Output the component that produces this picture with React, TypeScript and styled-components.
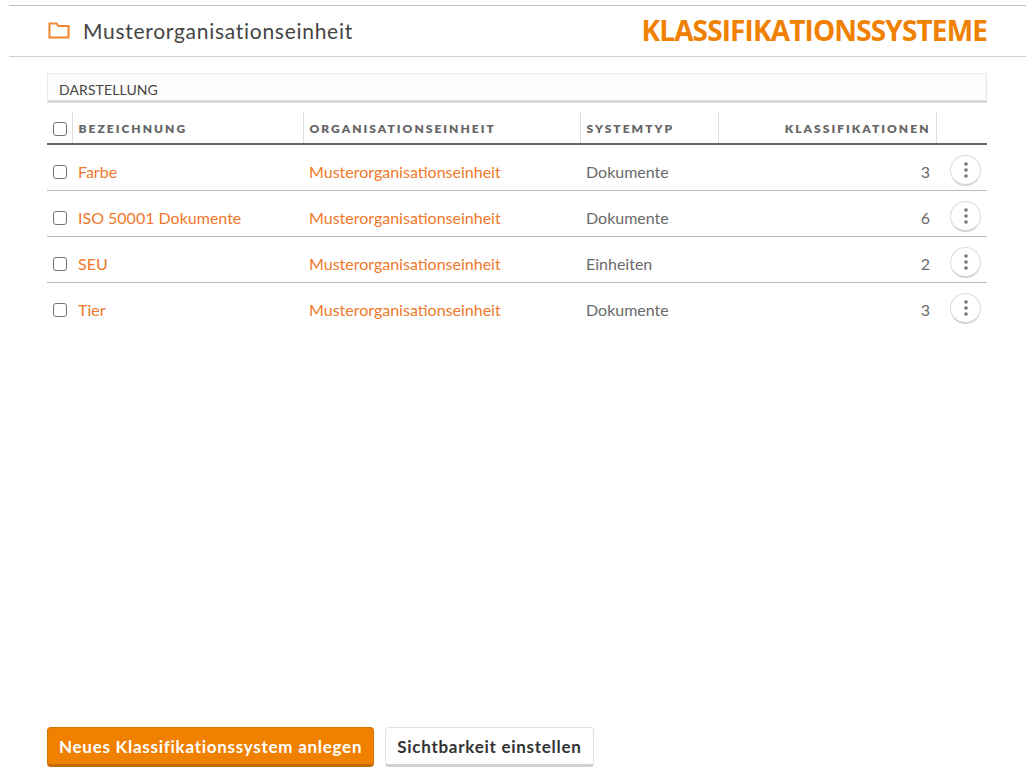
import React from 'react';
import styled, { createGlobalStyle } from 'styled-components';

const GlobalStyle = createGlobalStyle`
    html, body {
        margin: 0;
        padding: 0;
        background: #fff;
    }
    body {
        font-family: 'Lato', 'Liberation Sans', sans-serif;
        color: #444;
    }
`;

const Page = styled.div`
    width: 1035px;
    height: 777px;
    padding-top: 5px;
    box-sizing: border-box;
    display: flex;
    flex-direction: column;
    overflow: hidden;
`;

const Header = styled.header`
    margin: 0 9px;
    height: 52px;
    box-sizing: border-box;
    border-top: 1px solid #bdbdbd;
    border-bottom: 1px solid #cfcfcf;
    padding: 0 39px 2px 39px;
    display: flex;
    align-items: center;
    justify-content: space-between;
`;

const HeaderLeft = styled.div`
    display: flex;
    align-items: center;
    gap: 13px;
`;

const OrgName = styled.span`
    font-size: 21px;
    letter-spacing: 0.72px;
    color: #444;
`;

const PageTitle = styled.h1`
    margin: 0;
    font-family: 'Open Sans', sans-serif;
    font-size: 28px;
    font-weight: 700;
    letter-spacing: -0.87px;
    color: #f08000;
`;

const Content = styled.main`
    flex: 1;
    padding: 16px 48px 0 47px;
    display: flex;
    flex-direction: column;
`;

const ViewBar = styled.div`
    height: 30px;
    box-sizing: border-box;
    border: 1px solid #e6e6e6;
    border-bottom: 3px solid #d9d9d9;
    background: #fcfcfc;
    padding: 7px 0 0 11px;
    font-size: 14px;
    line-height: 18px;
    letter-spacing: 0.1px;
    color: #444;
`;

const Table = styled.table`
    width: 940px;
    margin-top: 9px;
    border-collapse: collapse;
    table-layout: fixed;
`;

const HeadCell = styled.th<{ $align?: string }>`
    height: 32px;
    box-sizing: border-box;
    padding: 2px 5px 0 6px;
    border-bottom: 2px solid #666;
    border-right: 1px solid #dedede;
    text-align: ${(p) => p.$align || 'left'};
    font-size: 12px;
    font-weight: 800;
    letter-spacing: 2.03px;
    color: #666;
    white-space: nowrap;

    &:last-child {
        border-right: none;
    }
`;

const CheckHeadCell = styled(HeadCell)`
    padding: 2px 0 0;
`;

const Row = styled.tr`
    border-bottom: 1px solid #b9b9b9;

    &:last-child {
        border-bottom: none;
    }
`;

const Cell = styled.td<{ $align?: string }>`
    height: 46px;
    box-sizing: border-box;
    padding: 8px 6px 0;
    text-align: ${(p) => p.$align || 'left'};
    font-size: 16px;
    color: #6a6a6a;
    white-space: nowrap;
`;

const CheckBodyCell = styled(Cell)`
    padding: 10px 0 0;
`;

const ActionCell = styled(Cell)`
    padding: 6px 0 0;
`;

const RowLink = styled.a`
    color: #f0782a;
    text-decoration: none;
`;

const CheckCell = styled.div`
    display: flex;
    align-items: center;
    justify-content: center;
    width: 26px;
`;

const Check = styled.span`
    display: block;
    width: 14px;
    height: 14px;
    box-sizing: border-box;
    border: 1px solid #767676;
    border-radius: 3px;
    background: #fff;
`;

const MenuButton = styled.button`
    width: 31px;
    height: 31px;
    margin-left: 14px;
    padding: 0;
    border: 1px solid #dcdcdc;
    border-bottom: 2px solid #d4d4d4;
    border-radius: 50%;
    background: #fff;
    display: flex;
    align-items: center;
    justify-content: center;
`;

const Footer = styled.footer`
    padding: 0 47px 10px;
    display: flex;
    gap: 11px;
`;

const Button = styled.button<{ $primary?: boolean }>`
    height: 40px;
    padding: 0 11px;
    box-sizing: border-box;
    border-radius: 4px;
    font-family: 'Lato', sans-serif;
    font-size: 17px;
    font-weight: 700;
    letter-spacing: 0.73px;
    white-space: nowrap;
    background: ${(p) => (p.$primary ? '#f08000' : '#fff')};
    color: ${(p) => (p.$primary ? '#fff' : '#333')};
    border: 1px solid ${(p) => (p.$primary ? '#d87300' : '#e2e2e2')};
    border-bottom: 3px solid ${(p) => (p.$primary ? '#c46a00' : '#d0d0d0')};
`;

const rows = [
    { name: 'Farbe', type: 'Dokumente', count: 3 },
    { name: 'ISO 50001 Dokumente', type: 'Dokumente', count: 6 },
    { name: 'SEU', type: 'Einheiten', count: 2 },
    { name: 'Tier', type: 'Dokumente', count: 3 },
];

const FolderIcon = () => (
    <svg width="22" height="17" viewBox="0 0 22 17" fill="none">
        <path d="M1.5 15.5V1.5H8.5L10.5 4H20.5V15.5Z" stroke="#f5852a" strokeWidth="2" />
    </svg>
);

const DotsIcon = () => (
    <svg width="4" height="16" viewBox="0 0 4 16" fill="#777">
        <circle cx="2" cy="2" r="1.8" />
        <circle cx="2" cy="8" r="1.8" />
        <circle cx="2" cy="14" r="1.8" />
    </svg>
);

export default function App() {
    return (
        <>
            <GlobalStyle />
            <Page>
                <Header>
                    <HeaderLeft>
                        <FolderIcon />
                        <OrgName>Musterorganisationseinheit</OrgName>
                    </HeaderLeft>
                    <PageTitle>KLASSIFIKATIONSSYSTEME</PageTitle>
                </Header>
                <Content>
                    <ViewBar>DARSTELLUNG</ViewBar>
                    <Table>
                        <colgroup>
                            <col width="25" />
                            <col width="231" />
                            <col width="277" />
                            <col width="138" />
                            <col width="218" />
                            <col width="51" />
                        </colgroup>
                        <thead>
                            <tr>
                                <CheckHeadCell>
                                    <CheckCell>
                                        <Check />
                                    </CheckCell>
                                </CheckHeadCell>
                                <HeadCell>BEZEICHNUNG</HeadCell>
                                <HeadCell>ORGANISATIONSEINHEIT</HeadCell>
                                <HeadCell>SYSTEMTYP</HeadCell>
                                <HeadCell $align="right">KLASSIFIKATIONEN</HeadCell>
                                <HeadCell />
                            </tr>
                        </thead>
                        <tbody>
                            {rows.map((row) => (
                                <Row key={row.name}>
                                    <CheckBodyCell>
                                        <CheckCell>
                                            <Check />
                                        </CheckCell>
                                    </CheckBodyCell>
                                    <Cell>
                                        <RowLink href="#">{row.name}</RowLink>
                                    </Cell>
                                    <Cell>
                                        <RowLink href="#">Musterorganisationseinheit</RowLink>
                                    </Cell>
                                    <Cell>{row.type}</Cell>
                                    <Cell $align="right">{row.count}</Cell>
                                    <ActionCell>
                                        <MenuButton>
                                            <DotsIcon />
                                        </MenuButton>
                                    </ActionCell>
                                </Row>
                            ))}
                        </tbody>
                    </Table>
                </Content>
                <Footer>
                    <Button $primary>Neues Klassifikationssystem anlegen</Button>
                    <Button>Sichtbarkeit einstellen</Button>
                </Footer>
            </Page>
        </>
    );
}
